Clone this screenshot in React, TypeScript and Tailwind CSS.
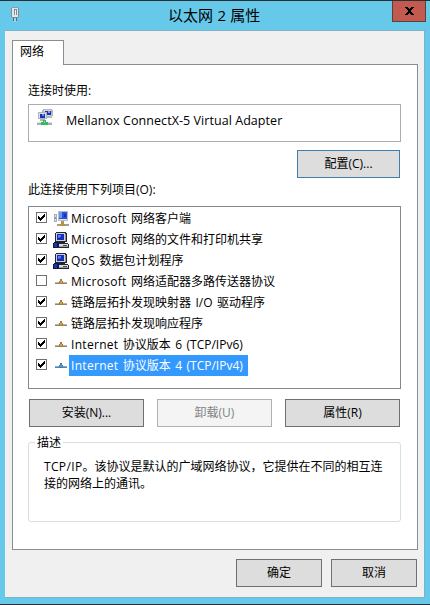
import React from "react";

const FONT = "font-['Open_Sans','Noto_Sans_CJK_SC',sans-serif]";

function TitleIcon() {
  return (
    <svg width="10" height="16" viewBox="0 0 10 16" shapeRendering="crispEdges">
      <rect x="2" y="0" width="6" height="1" fill="#8f9aa3" />
      <rect x="1" y="1" width="8" height="9" fill="#7f8b95" />
      <rect x="2" y="1" width="6" height="9" fill="#dfe7ec" />
      <rect x="4" y="2" width="3" height="6" fill="#7d8b99" />
      <rect x="5" y="3" width="1" height="5" fill="#eef3f7" />
      <rect x="2" y="10" width="6" height="1" fill="#7f8b95" />
      <rect x="3" y="11" width="1" height="3" fill="#3f6f9c" />
      <rect x="4" y="11" width="2" height="4" fill="#a9cfe6" />
      <rect x="6" y="11" width="1" height="3" fill="#3f6f9c" />
    </svg>
  );
}

function AdapterIcon() {
  return (
    <svg width="16" height="17" viewBox="0 0 16 17" shapeRendering="crispEdges">
      <path d="M6 0h9v1h1v6h-1v2H8V7H5V1h1z" fill="#b5b9b5" />
      <path d="M7 1h7v6H7z" fill="#d4d8de" />
      <path d="M8 2h6v4H8z" fill="#1730c8" />
      <path d="M11 2h2v2h-2z" fill="#819cf0" />
      <path d="M1 3h9v7H8v2H3v-2H1z" fill="#aeb4b8" />
      <path d="M2 4h7v5H2z" fill="#dcdfe5" />
      <path d="M3 5h5v4H3z" fill="#172fc2" />
      <path d="M5 5h2v2H5z" fill="#6d89ea" />
      <path d="M6 11h3v2h2v3H4v-3h2z" fill="#31b765" />
      <path d="M0 14h4v2H0zM11 14h4v2h-4z" fill="#a8b0ac" />
      <path d="M0 13h4v1H0zM11 13h4v1h-4z" fill="#d9dfdc" />
      <path d="M7 12h1v2H7z" fill="#7fe09e" />
    </svg>
  );
}

function ClientIcon() {
  return (
    <svg width="16" height="16" viewBox="0 0 16 16" shapeRendering="crispEdges">
      <path d="M1 3h3v8H1z" fill="#a9adb2" />
      <path d="M2 4h1v6H2z" fill="#e4e5e6" />
      <path d="M2 6h1v2H2z" fill="#8b9298" />
      <path d="M5 0h10v10H5z" fill="#b9bdc4" />
      <path d="M6 1h8v8H6z" fill="#d8e5fb" />
      <path d="M6 1h8v7H6z" fill="#2d50d8" />
      <path d="M6 1h3v6H6z" fill="#6d9af0" />
      <path d="M11 3h2v3h-2z" fill="#1733b4" />
      <path d="M8 10h3v2H8z" fill="#9a9a98" />
      <path d="M4 13h12v2H4z" fill="#9b9fa0" />
      <path d="M8 11h3v2h1v2H7v-2h1z" fill="#c98d30" />
    </svg>
  );
}

function ServiceIcon() {
  return (
    <svg width="16" height="16" viewBox="0 0 16 16" shapeRendering="crispEdges">
      <path d="M3 0h10v1h1v9h-2v1h3v1h1v4H4v-5h1v-1H2V1h1z" fill="#23262c" />
      <path d="M3 1h9v8H3z" fill="#d0d3d8" />
      <path d="M4 2h7v6H4z" fill="#142fc0" />
      <path d="M5 3h3v2H5z" fill="#5b83ee" />
      <path d="M5 5h2v1H5z" fill="#3a60de" />
      <path d="M12 2h1v7h-1z" fill="#8b8e95" />
      <path d="M6 12h9v2H6z" fill="#d9dbdd" />
      <path d="M6 14h9v1H6z" fill="#989ba0" />
      <path d="M10 13h4v1h-4z" fill="#4a4d52" />
      <path d="M1 10h4v1h1v4H5v1H0v-5h1z" fill="#0b1850" />
      <path d="M1 11h3v4H1z" fill="#17399c" />
    </svg>
  );
}

function ProtocolIcon({ selected }: { selected?: boolean }) {
  return (
    <svg width="12" height="5" viewBox="0 0 12 5" shapeRendering="crispEdges">
      <path d="M0 3h12v1H0z" fill={selected ? "#86acd0" : "#b4b6b6"} />
      <path d="M0 4h12v1H0z" fill={selected ? "#5288b2" : "#858889"} />
      <path d="M5 0h2v2h1v3H4V2h1z" fill={selected ? "#397fac" : "#a97a35"} />
      <path d="M5 2h2v2H5z" fill={selected ? "#629fb5" : "#dda23d"} />
    </svg>
  );
}

function CheckBox({ checked }: { checked: boolean }) {
  return (
    <span className="mt-1 flex h-[11px] w-[11px] shrink-0 items-center justify-center border border-[#707070] bg-white">
      {checked && (
        <svg width="9" height="9" viewBox="0 0 9 9" shapeRendering="crispEdges">
          <path d="M1 3h1v1h1v1h1V4h1V3h1V2h1V1h1v3H7v1H6v1H5v1H4v1H3V7H2V6H1z" fill="#000" />
        </svg>
      )}
    </span>
  );
}

type Kind = "client" | "service" | "protocol";
type Item = { kind: Kind; latin?: string; text: string; checked: boolean; selected?: boolean };

const items: Item[] = [
  { kind: "client", latin: "Microsoft", text: " 网络客户端", checked: true },
  { kind: "service", latin: "Microsoft", text: " 网络的文件和打印机共享", checked: true },
  { kind: "service", latin: "QoS", text: " 数据包计划程序", checked: true },
  { kind: "protocol", latin: "Microsoft", text: " 网络适配器多路传送器协议", checked: false },
  { kind: "protocol", text: "链路层拓扑发现映射器 I/O 驱动程序", checked: true },
  { kind: "protocol", text: "链路层拓扑发现响应程序", checked: true },
  { kind: "protocol", latin: "Internet", text: " 协议版本 6 (TCP/IPv6)", checked: true },
  { kind: "protocol", latin: "Internet", text: " 协议版本 4 (TCP/IPv4)", checked: true, selected: true },
];

function Row({ item }: { item: Item }) {
  return (
    <li className="flex h-[21px] items-start">
      <CheckBox checked={item.checked} />
      <span className="ml-[6px] flex h-[21px] w-4 shrink-0 items-center justify-center">
        {item.kind === "client" && <ClientIcon />}
        {item.kind === "service" && <ServiceIcon />}
        {item.kind === "protocol" && <ProtocolIcon selected={item.selected} />}
      </span>
      <span
        className={
          "h-[21px] pl-[2px] leading-[21px] [word-spacing:1.3px] " +
          (item.selected ? "w-[179px] bg-[#3399ff] text-white" : "text-black")
        }
      >
        {item.latin && <span className="tracking-[0.3px]">{item.latin}</span>}
        {item.text}
      </span>
    </li>
  );
}

function Button({ label, width, tone }: { label: string; width: string; tone?: "focus" | "disabled" }) {
  const color =
    tone === "focus"
      ? "border-[#3c7fb1] bg-[#dddddd] text-black"
      : tone === "disabled"
        ? "border-[#adb2b5] bg-[#f4f4f4] text-[#838383]"
        : "border-[#707070] bg-[#dddddd] text-black";
  return (
    <button className={"flex h-7 items-center justify-center border leading-none " + width + " " + color}>
      {label}
    </button>
  );
}

export default function App() {
  return (
    <div
      className={
        "flex h-[605px] w-[430px] flex-col overflow-hidden whitespace-nowrap border-y border-[#2b2f36] bg-[#66c9ea] text-[12px] text-black " +
        FONT
      }
    >
      <header className="flex h-[29px] shrink-0 items-start">
        <div className="ml-[10px] mt-[6px] w-[10px]">
          <TitleIcon />
        </div>
        <h1 className="ml-[148px] mt-[3px] w-[224px] text-[15px] leading-[22px] [word-spacing:0.5px]">以太网 2 属性</h1>
        <button className="flex h-[21px] w-[34px] items-center justify-center border border-t-0 border-[#58413f] bg-[#c35a50]">
          <svg width="9" height="8" viewBox="0 0 9 8" shapeRendering="crispEdges">
            <path d="M0 0h3v1h1v1h1V1h1V0h3v1H8v1H7v1H6v2h1v1h1v1h1v1H6V7H5V6H4v1H3v1H0V7h1V6h1V5h1V3H2V2H1V1H0z" />
          </svg>
        </button>
      </header>

      <main className="ml-[5px] flex h-[568px] w-[420px] flex-col border-b border-r border-t border-[#7fb2c6] bg-[#f0f0f0] pl-[7px] pt-[9px]">
        <div className="z-10 -mb-px h-[25px] w-[52px] shrink-0 border border-b-0 border-[#898c95] bg-white pl-[7px] leading-[22px]">
          网络
        </div>
        <section className="flex h-[486px] w-[406px] shrink-0 flex-col border border-[#898c95] bg-white px-[15px]">
          <p className="mt-[17px] h-[18px] leading-[18px]">连接时使用:</p>
          <div className="mt-1 flex h-[38px] w-[373px] shrink-0 border border-[#abadb3]">
            <span className="ml-2 mt-1">
              <AdapterIcon />
            </span>
            <span className="ml-[13px] mt-[7px] text-[12.5px] leading-[18px] tracking-[0.06px]">
              Mellanox ConnectX-5 Virtual Adapter
            </span>
          </div>
          <div className="mr-[2px] mt-2 flex justify-end">
            <Button label="配置(C)..." width="w-[103px]" tone="focus" />
          </div>
          <p className="mt-[3px] h-[18px] leading-[18px]">此连接使用下列项目(O):</p>
          <ul className="mt-[7px] h-[183px] w-[373px] shrink-0 border border-[#828790] pl-[7px] pt-px">
            {items.map((item) => (
              <Row key={(item.latin ?? "") + item.text} item={item} />
            ))}
          </ul>
          <div className="ml-px mt-[10px] flex gap-[13px]">
            <Button label="安装(N)..." width="w-[115px]" />
            <Button label="卸载(U)" width="w-[115px]" tone="disabled" />
            <Button label="属性(R)" width="w-[115px]" />
          </div>
          <div className="mt-[15px] h-[80px] w-[373px] shrink-0 rounded-[3px] border border-[#d5dfe5]">
            <div className="-mt-[9px] ml-[6px] h-[18px] w-[28px] bg-white pl-[2px] leading-[17px]">描述</div>
            <p className="ml-[15px] mt-[6px] leading-[17px]">
              <span className="tracking-[0.35px]">TCP/IP</span>。该协议是默认的广域网络协议，它提供在不同的相互连
              <br />
              接的网络上的通讯。
            </p>
          </div>
        </section>
        <footer className="mr-[7px] mt-[9px] flex justify-end gap-[9px]">
          <Button label="确定" width="w-[86px]" />
          <Button label="取消" width="w-[86px]" />
        </footer>
      </main>
    </div>
  );
}
